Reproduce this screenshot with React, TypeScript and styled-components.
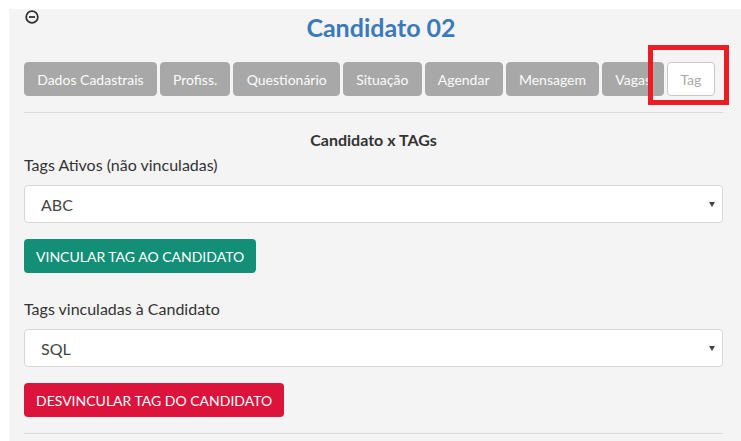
import styled, { createGlobalStyle } from 'styled-components';

const GlobalStyle = createGlobalStyle`
  html, body {
    margin: 0;
    padding: 0;
    background: #ffffff;
  }
  body {
    font-family: Lato, "Open Sans", "Liberation Sans", sans-serif;
    color: #333;
  }
`;

const tabs = ['Dados Cadastrais', 'Profiss.', 'Questionário', 'Situação', 'Agendar', 'Mensagem', 'Vagas'];

function MinusCircle() {
  return (
    <svg width="14" height="14" viewBox="0 0 14 14">
      <circle cx="7" cy="7" r="5.8" fill="none" stroke="#333" strokeWidth="1.8" />
      <line x1="4" y1="7" x2="10" y2="7" stroke="#333" strokeWidth="1.8" />
    </svg>
  );
}

export default function App() {
  return (
    <>
      <GlobalStyle />
      <Panel>
        <Header>
          <Toggle>
            <MinusCircle />
          </Toggle>
          <Title>Candidato 02</Title>
        </Header>

        <TabBar>
          {tabs.map((t) => (
            <Tab key={t}>{t}</Tab>
          ))}
          <Highlighted>
            <Tab $active>Tag</Tab>
            <RedMark />
          </Highlighted>
        </TabBar>

        <Divider />

        <SectionTitle>Candidato x TAGs</SectionTitle>

        <Label>Tags Ativos (não vinculadas)</Label>
        <SelectWrap>
          <Select defaultValue="ABC">
            <option>ABC</option>
          </Select>
          <Caret />
        </SelectWrap>
        <ActionButton $color="#148f77">VINCULAR TAG AO CANDIDATO</ActionButton>

        <Label $spaced>Tags vinculadas à Candidato</Label>
        <SelectWrap>
          <Select defaultValue="SQL">
            <option>SQL</option>
          </Select>
          <Caret />
        </SelectWrap>
        <ActionButton $color="#dc143c">DESVINCULAR TAG DO CANDIDATO</ActionButton>

        <Divider />
      </Panel>
    </>
  );
}

const Panel = styled.div`
  margin: 9px 0 0 9px;
  background: #f4f4f4;
  padding: 0 18px 20px 15px;
  min-height: 432px;
  box-sizing: border-box;
`;

const Header = styled.div`
  display: flex;
  align-items: flex-start;
`;

const Toggle = styled.span`
  display: flex;
  width: 14px;
  height: 14px;
  margin-top: 1px;
  margin-left: 1px;
`;

const Title = styled.h2`
  flex: 1;
  margin: 3px 0 0;
  text-align: center;
  font-size: 25px;
  line-height: 30px;
  font-weight: 700;
  color: #3a7abb;
`;

const TabBar = styled.div`
  display: flex;
  gap: 3px;
  margin-top: 20px;
`;

const Tab = styled.button<{ $active?: boolean }>`
  height: 34px;
  padding: 0 12.2px;
  border-radius: 4px;
  font-family: inherit;
  font-size: 14px;
  border: 1px solid ${(p) => (p.$active ? '#c9c9c9' : '#a8a8a8')};
  background: ${(p) => (p.$active ? '#ffffff' : '#a8a8a8')};
  color: ${(p) => (p.$active ? '#a9a9a9' : '#fbfbfb')};
  cursor: pointer;
`;

const Highlighted = styled.span`
  position: relative;
  display: flex;
`;

const RedMark = styled.span`
  position: absolute;
  top: -17px;
  bottom: -9px;
  left: -19px;
  right: -14px;
  border: 5px solid #ed1c24;
  pointer-events: none;
`;

const Divider = styled.hr`
  border: 0;
  border-top: 1px solid #dcdcdc;
  margin: 16px 0 0;
`;

const SectionTitle = styled.div`
  margin-top: 17px;
  text-align: center;
  font-weight: 700;
  font-size: 16px;
  line-height: 19px;
  color: #333;
`;

const Label = styled.div<{ $spaced?: boolean }>`
  margin-top: ${(p) => (p.$spaced ? '26px' : '6px')};
  font-size: 16px;
  line-height: 19px;
  color: #333;
`;

const SelectWrap = styled.div`
  position: relative;
  margin-top: 11px;
`;

const Select = styled.select`
  appearance: none;
  width: 100%;
  height: 38px;
  box-sizing: border-box;
  padding: 0 30px 0 16px;
  border: 1px solid #d3d7dc;
  border-radius: 4px;
  background: #ffffff;
  font-family: inherit;
  font-size: 16px;
  color: #444;
  outline: none;
`;

const Caret = styled.span`
  position: absolute;
  right: 8px;
  top: 17px;
  width: 0;
  height: 0;
  border-left: 3px solid transparent;
  border-right: 3px solid transparent;
  border-top: 5px solid #444;
  pointer-events: none;
`;

const ActionButton = styled.button<{ $color: string }>`
  display: block;
  margin-top: 16px;
  height: 34px;
  padding: 0 12px;
  border: 0;
  border-radius: 4px;
  background: ${(p) => p.$color};
  color: #ffffff;
  font-family: inherit;
  font-size: 14px;
  cursor: pointer;
`;
